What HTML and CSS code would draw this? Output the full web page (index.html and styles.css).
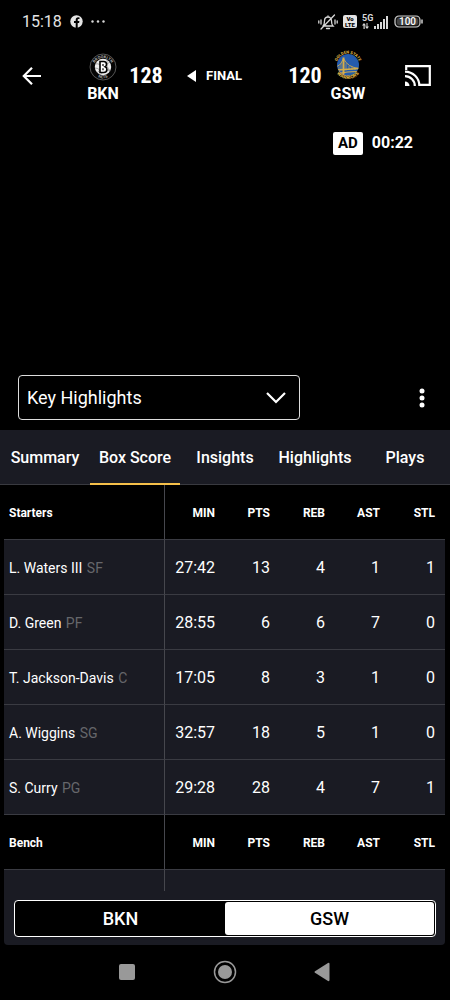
FILE: index.html
```html
<!DOCTYPE html>
<html lang="en">
<head>
<meta charset="utf-8">
<meta name="viewport" content="width=device-width, initial-scale=1">
<title>BKN 128 – GSW 120</title>
<link rel="stylesheet" href="styles.css">
</head>
<body>
<div class="status-bar">
  <span class="clock">15:18</span>
  <svg class="fb" width="13" height="13" viewBox="0 0 13 13" aria-hidden="true"><circle cx="6.500" cy="6.500" r="6.200" fill="#e4e4e4"/><path d="M5.700 13V8H4V6.100h1.700V4.900c0-1.700 1-2.600 2.500-2.600l1.300.1v1.500h-.8c-.8 0-1 .4-1 1v1.200h1.700L9.100 8H7.700v5z" fill="#000"/></svg>
  <svg width="14" height="3" viewBox="0 0 14 3" fill="#d8d8d8" aria-hidden="true"><circle cx="1.500" cy="1.500" r="1.200"/><circle cx="7" cy="1.500" r="1.200"/><circle cx="12.500" cy="1.500" r="1.200"/></svg>
  <div class="system-icons">
    <svg width="20" height="16" viewBox="0 0 20 16" fill="none" stroke="#d8d8d8" stroke-width="1.300" stroke-linecap="round" aria-hidden="true"><path d="M5 12h10c-1.300-1.200-1.500-2.500-1.500-5 0-2.400-1.400-4-3.500-4S6.500 4.600 6.500 7c0 2.500-.2 3.800-1.500 5M8.500 14.500h3M10 3V1.800M3 15 16.500 1M3 6v4M.8 7v2M17 6v4M19.200 7v2"/></svg>
    <svg width="14" height="13" viewBox="0 0 14 13" aria-hidden="true"><rect width="14" height="13" rx="2" fill="#e4e4e4"/><g font-family="Roboto, sans-serif" font-weight="900" font-size="6" text-anchor="middle" fill="#000"><text x="7" y="6">Vo</text><text x="7" y="12">LTE</text></g></svg>
    <svg class="signal" width="27" height="16" viewBox="0 0 27 16" fill="#d8d8d8" aria-hidden="true"><text x="0" y="7" font-family="Roboto, sans-serif" font-weight="700" font-size="9">5G</text><path d="M12 12h2v3h-2zM15 10h2v5h-2zM18 8h2v7h-2zM21 5h2v10h-2zM24 2h2v13h-2zM2 9l2 2.500H2.700V15H1.500v-3.500H0zM5 15l-2-2.500h1.500V9h1v3.500H7z"/></svg>
    <svg width="30" height="13" viewBox="0 0 30 13" aria-hidden="true"><rect x="1" y="1" width="25" height="11" rx="4" fill="#181818" stroke="#d0d0d0" stroke-width="1.200"/><rect x="3" y="3" width="21" height="7" rx="2" fill="#444"/><path d="M28 4.500v4" stroke="#d0d0d0" stroke-width="1.500"/><text x="13.500" y="10" text-anchor="middle" fill="#fff" font-family="Roboto, sans-serif" font-size="10" font-weight="500">100</text></svg>
  </div>
</div>

<header class="game-header">
  <button class="icon-button back" aria-label="Back"><svg width="24" height="24" viewBox="0 0 24 24" fill="none" stroke="#fff" stroke-width="2.200"><path d="M21 12H4.500M12 3.800 3.800 12l8.200 8.200"/></svg></button>
  <div class="team">
    <svg width="28" height="28" viewBox="0 0 28 28" aria-hidden="true"><defs><path id="nets-top" d="M4.200 15a9.800 9.800 0 1 1 19.600 0"/><path id="nets-bottom" d="M2.700 14a11.300 11.300 0 0 0 22.600 0"/></defs><circle cx="14" cy="14" r="13" fill="#050505" stroke="#777" stroke-width=".7"/><circle cx="14" cy="14" r="8.200" fill="#eee"/><path d="M6 11q5-1 7 3t9 3M8 20q4-6 13-11M18 7q-1 7 3 12M6 15q5 0 7 6" fill="none" stroke="#555" stroke-width=".5"/><path d="M11 8.500h3.700q2.800 0 2.800 2.700 0 1.900-1.300 2.500 1.700.7 1.700 2.800 0 3-3.200 3H11z" fill="#fff" stroke="#000" stroke-width="1.600"/><path d="M14 11v2M14 15.200v2" fill="none" stroke="#000" stroke-width="1.200"/><g fill="#aaa" font-family="Roboto, sans-serif" font-weight="700" font-size="4" text-anchor="middle"><text><textPath href="#nets-top" startOffset="50%">BROOKLYN</textPath></text><text><textPath href="#nets-bottom" startOffset="50%">NETS</textPath></text></g></svg>
    <span class="team-code">BKN</span>
  </div>
  <span class="score">128</span>
  <div class="game-status"><svg width="10" height="12" viewBox="0 0 10 12" fill="#fff" aria-hidden="true"><path d="M0 6 9 0v12z"/></svg>FINAL</div>
  <span class="score">120</span>
  <div class="team">
    <svg width="32" height="32" viewBox="-2 -2 32 32" aria-hidden="true"><defs><path id="warriors-top" d="M2.500 14a11.500 11.500 0 0 1 23 0"/><path id="warriors-bottom" d="M0 14a14 14 0 0 0 28 0"/><clipPath id="warriors-disc"><circle cx="14" cy="14" r="10.800"/></clipPath></defs><circle cx="14" cy="14" r="11" fill="#245bad"/><g clip-path="url(#warriors-disc)" stroke="#d6ae49" fill="none"><path d="M3 19 25 17.500" stroke-width="1.700"/><path d="M9.500 6.500v17" stroke-width="2"/><path d="M3 15.500q4-1 6.500-8 4 9 16 10" stroke-width=".9"/><path d="M5 15.500v4M7 12.500v7M12 12.500v7M15 15v4M18 16v3M21 17v2" stroke-width=".6"/><path d="M4 22.500q9-2 20-2" stroke-width="1.200"/></g><g fill="#dcae43" font-family="Roboto, sans-serif" font-weight="900" text-anchor="middle"><text font-size="4"><textPath href="#warriors-top" startOffset="50%">GOLDEN STATE</textPath></text><text font-size="5"><textPath href="#warriors-bottom" startOffset="50%">WARRIORS</textPath></text></g></svg>
    <span class="team-code">GSW</span>
  </div>
  <button class="icon-button cast" aria-label="Cast"><svg width="28" height="24" viewBox="0 0 28 24" fill="none" stroke="#fff" stroke-width="2.200"><path d="M2.200 6V2.200h23.600v18.600H16M1 12.200a9.800 9.800 0 0 1 9.800 9.800M1 7.600A14.400 14.400 0 0 1 15.400 22"/><path d="M1 17.500A4.500 4.500 0 0 1 5.500 22H1z" fill="#fff" stroke="none"/></svg></button>
</header>

<section class="player" aria-label="Video">
  <div class="ad-info"><span class="ad-badge">AD</span><span>00:22</span></div>
  <div class="video-controls">
    <div class="select-box">
      <select aria-label="Video selection"><option>Key Highlights</option></select>
      <svg class="chevron" width="20" height="12" viewBox="0 0 20 12" fill="none" stroke="#fff" stroke-width="2.200" aria-hidden="true"><path d="m1 1 9 9 9-9"/></svg>
    </div>
    <button class="icon-button" aria-label="More options"><svg width="8" height="20" viewBox="0 0 8 20" fill="#fff"><circle cx="4" cy="3" r="2.500"/><circle cx="4" cy="10" r="2.500"/><circle cx="4" cy="17" r="2.500"/></svg></button>
  </div>
</section>

<nav class="tabs" role="tablist" aria-label="Game details">
  <button role="tab" aria-selected="false">Summary</button>
  <button role="tab" aria-selected="true">Box Score</button>
  <button role="tab" aria-selected="false">Insights</button>
  <button role="tab" aria-selected="false">Highlights</button>
  <button role="tab" aria-selected="false">Plays</button>
</nav>

<main class="panel">
  <table class="box-score">
    <colgroup><col><col class="col-min"><col class="col-stat"><col class="col-stat"><col class="col-stat"><col class="col-stat"></colgroup>
    <tbody>
      <tr class="heading"><th scope="col">Starters</th><th scope="col">MIN</th><th scope="col">PTS</th><th scope="col">REB</th><th scope="col">AST</th><th scope="col">STL</th></tr>
      <tr><th scope="row">L. Waters III <span>SF</span></th><td>27:42</td><td>13</td><td>4</td><td>1</td><td>1</td></tr>
      <tr><th scope="row">D. Green <span>PF</span></th><td>28:55</td><td>6</td><td>6</td><td>7</td><td>0</td></tr>
      <tr><th scope="row">T. Jackson-Davis <span>C</span></th><td>17:05</td><td>8</td><td>3</td><td>1</td><td>0</td></tr>
      <tr><th scope="row">A. Wiggins <span>SG</span></th><td>32:57</td><td>18</td><td>5</td><td>1</td><td>0</td></tr>
      <tr><th scope="row">S. Curry <span>PG</span></th><td>29:28</td><td>28</td><td>4</td><td>7</td><td>1</td></tr>
    </tbody>
    <tbody>
      <tr class="heading"><th scope="col">Bench</th><th scope="col">MIN</th><th scope="col">PTS</th><th scope="col">REB</th><th scope="col">AST</th><th scope="col">STL</th></tr>
      <tr class="partial"><th></th><td></td><td></td><td></td><td></td><td></td></tr>
    </tbody>
  </table>
  <div class="team-toggle">
    <button aria-pressed="false">BKN</button>
    <button aria-pressed="true">GSW</button>
  </div>
</main>

<nav class="system-nav" aria-label="System">
  <button class="icon-button" aria-label="Recent apps"><svg width="24" height="24" viewBox="0 0 24 24"><rect x="4" y="4" width="16" height="16" rx="2" fill="#999"/></svg></button>
  <button class="icon-button" aria-label="Home"><svg width="24" height="24" viewBox="0 0 24 24"><circle cx="12" cy="12" r="10.500" fill="none" stroke="#999" stroke-width="1.500"/><circle cx="12" cy="12" r="7" fill="#999"/></svg></button>
  <button class="icon-button" aria-label="System back"><svg width="24" height="24" viewBox="0 0 24 24"><path d="M4 11.200 17 3q1.500-.6 1.500 1v16q0 1.600-1.500 1L4 12.800q-1.200-.8 0-1.600z" fill="#999"/></svg></button>
</nav>
</body>
</html>
```
FILE: styles.css
```css
* {
  box-sizing: border-box;
}

body {
  margin: 0;
  background: #000;
  color: #fff;
  font-family: Roboto, "Liberation Sans", sans-serif;
}

svg {
  display: block;
  flex: none;
}

button,
select {
  margin: 0;
  padding: 0;
  border: 0;
  background: none;
  color: inherit;
  font: inherit;
}

.icon-button {
  flex: none;
}

.status-bar {
  display: flex;
  align-items: center;
  gap: 8px;
  height: 42px;
  padding: 1px 26px 0 22px;
}

.clock {
  color: #e4e4e4;
  font-size: 16px;
  line-height: 20px;
}

.system-icons {
  display: flex;
  align-items: center;
  gap: 5px;
  margin-left: auto;
}

.game-header {
  display: flex;
  align-items: center;
  height: 68px;
  padding: 0 18px 0 20px;
}

.back {
  margin-right: 39px;
}

.cast {
  margin-left: 36px;
}

.team {
  display: flex;
  flex-direction: column;
  align-items: center;
  justify-content: flex-end;
  width: 40px;
  height: 60px;
}

.team svg {
  margin-bottom: 1px;
}

.team-code {
  font-size: 16px;
  font-weight: 700;
  line-height: 24px;
}

.score {
  display: flex;
  justify-content: center;
  width: 30px;
  margin: 0 8px;
  font-family: "Roboto Condensed", Roboto, sans-serif;
  font-size: 22px;
  font-weight: 700;
  line-height: 28px;
}

.game-status {
  display: flex;
  flex: 1;
  align-items: center;
  gap: 9px;
  padding-left: 18px;
  font-size: 13px;
  font-weight: 700;
  line-height: 20px;
}

.player {
  display: flex;
  flex-direction: column;
  justify-content: space-between;
  height: 320px;
  padding: 21px 18px 10px;
}

.ad-info {
  display: flex;
  align-items: center;
  align-self: flex-end;
  gap: 9px;
  margin-right: 19px;
  font-size: 16px;
  font-weight: 700;
  line-height: 24px;
}

.ad-badge {
  padding: 0 5px;
  border-radius: 2px;
  background: #fff;
  color: #000;
  font-size: 15px;
  line-height: 23px;
}

.video-controls {
  display: flex;
  align-items: center;
  justify-content: space-between;
  padding-right: 6px;
}

.select-box {
  position: relative;
  width: 69%;
}

.select-box select {
  width: 100%;
  height: 45px;
  padding: 0 40px 0 8px;
  border: 1px solid #ddd;
  border-radius: 4px;
  background: #000;
  font-size: 18px;
  appearance: none;
}

.chevron {
  position: absolute;
  top: 17px;
  right: 14px;
  pointer-events: none;
}

.tabs {
  display: grid;
  grid-template-columns: repeat(5, 1fr);
  height: 55px;
  border-bottom: 1px solid #393a40;
  background: #1a1b23;
}

.tabs button {
  height: 55px;
  padding-top: 2px;
  border-bottom: 2px solid transparent;
  font-size: 16px;
  font-weight: 500;
  white-space: nowrap;
}

.tabs [aria-selected="true"] {
  border-bottom-color: #f5c04a;
}

.panel {
  margin: 0 5px 0 4px;
  padding-bottom: 8px;
  border-radius: 0 0 4px 4px;
  background: #1a1b23;
}

.box-score {
  width: 100%;
  border-spacing: 0;
  table-layout: fixed;
  font-size: 16px;
}

.col-min {
  width: 60px;
}

.col-stat {
  width: 55px;
}

.box-score th,
.box-score td {
  height: 55px;
  padding: 1px 10px 0 0;
  border-bottom: 1px solid #3a3b42;
  text-align: right;
}

.box-score th:first-child {
  padding: 1px 0 0 5px;
  border-right: 1px solid #46474d;
  font-size: 14px;
  font-weight: 400;
  text-align: left;
  white-space: nowrap;
}

.box-score th span {
  margin-left: 1px;
  color: #66676b;
}

.box-score .heading {
  background: #000;
}

.box-score .heading th,
.box-score .heading th:first-child {
  font-size: 12px;
  font-weight: 700;
}

.box-score .partial th,
.box-score .partial td {
  height: 21px;
  border-bottom: 0;
}

.team-toggle {
  display: grid;
  grid-template-columns: 1fr 1fr;
  height: 37px;
  margin: 9px 9px 0 10px;
  padding: 1px;
  border: 1px solid #fff;
  border-radius: 4px;
  background: #000;
  font-size: 18px;
  font-weight: 500;
}

.team-toggle [aria-pressed="true"] {
  border-radius: 3px;
  background: #fff;
  color: #000;
}

.system-nav {
  display: flex;
  justify-content: center;
  gap: 74px;
  padding: 15px 0;
}
```
